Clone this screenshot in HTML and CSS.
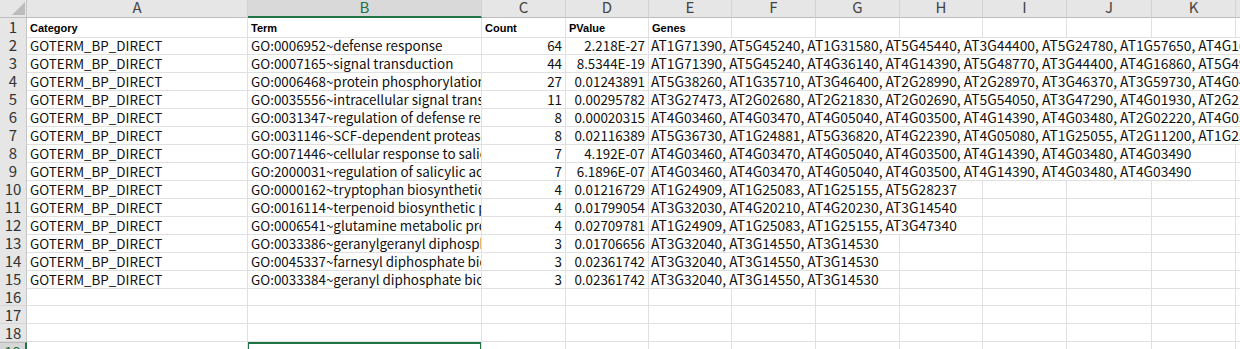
FILE: index.html
```html
<!DOCTYPE html>
<html>
<head>
    <meta charset="utf-8">
    <title>GO enrichment - BP DIRECT</title>
    <link rel="stylesheet" href="styles.css">
</head>
<body>
<div class="sheet">
    <div class="row colhead">
        <div class="corner"><span class="tri"></span></div>
        <div class="ch">A</div>
        <div class="ch sel">B</div>
        <div class="ch">C</div>
        <div class="ch">D</div>
        <div class="ch">E</div>
        <div class="ch">F</div>
        <div class="ch">G</div>
        <div class="ch">H</div>
        <div class="ch">I</div>
        <div class="ch">J</div>
        <div class="ch">K</div>
        <div class="ch">L</div>
    </div>

    <div class="row">
        <div class="rh">1</div>
        <div class="c hd">Category</div>
        <div class="c hd">Term</div>
        <div class="c hd">Count</div>
        <div class="c hd">PValue</div>
        <div class="c hd">Genes</div>
        <div class="c"></div><div class="c"></div><div class="c"></div><div class="c"></div>
        <div class="c"></div><div class="c"></div><div class="c"></div>
    </div>

    <div class="row">
        <div class="rh">2</div>
        <div class="c">GOTERM_BP_DIRECT</div>
        <div class="c">GO:0006952~defense response</div>
        <div class="c num">64</div>
        <div class="c num">2.218E-27</div>
        <div class="c genes s8">AT1G71390, AT5G45240, AT1G31580, AT5G45440, AT3G44400, AT5G24780, AT1G57650, AT4G16</div>
    </div>

    <div class="row">
        <div class="rh">3</div>
        <div class="c">GOTERM_BP_DIRECT</div>
        <div class="c">GO:0007165~signal transduction</div>
        <div class="c num">44</div>
        <div class="c num">8.5344E-19</div>
        <div class="c genes s8">AT1G71390, AT5G45240, AT4G36140, AT4G14390, AT5G48770, AT3G44400, AT4G16860, AT5G49</div>
    </div>

    <div class="row">
        <div class="rh">4</div>
        <div class="c">GOTERM_BP_DIRECT</div>
        <div class="c">GO:0006468~protein phosphorylation</div>
        <div class="c num">27</div>
        <div class="c num">0.01243891</div>
        <div class="c genes s8">AT5G38260, AT1G35710, AT3G46400, AT2G28990, AT2G28970, AT3G46370, AT3G59730, AT4G04</div>
    </div>

    <div class="row">
        <div class="rh">5</div>
        <div class="c">GOTERM_BP_DIRECT</div>
        <div class="c">GO:0035556~intracellular signal transduction</div>
        <div class="c num">11</div>
        <div class="c num">0.00295782</div>
        <div class="c genes s8">AT3G27473, AT2G02680, AT2G21830, AT2G02690, AT5G54050, AT3G47290, AT4G01930, AT2G21</div>
    </div>

    <div class="row">
        <div class="rh">6</div>
        <div class="c">GOTERM_BP_DIRECT</div>
        <div class="c">GO:0031347~regulation of defense response</div>
        <div class="c num">8</div>
        <div class="c num">0.00020315</div>
        <div class="c genes s8">AT4G03460, AT4G03470, AT4G05040, AT4G03500, AT4G14390, AT4G03480, AT2G02220, AT4G03</div>
    </div>

    <div class="row">
        <div class="rh">7</div>
        <div class="c">GOTERM_BP_DIRECT</div>
        <div class="c">GO:0031146~SCF-dependent proteasomal ubiquitin-dependent protein catabolic process</div>
        <div class="c num">8</div>
        <div class="c num">0.02116389</div>
        <div class="c genes s8">AT5G36730, AT1G24881, AT5G36820, AT4G22390, AT4G05080, AT1G25055, AT2G11200, AT1G25</div>
    </div>

    <div class="row">
        <div class="rh">8</div>
        <div class="c">GOTERM_BP_DIRECT</div>
        <div class="c">GO:0071446~cellular response to salicylic acid stimulus</div>
        <div class="c num">7</div>
        <div class="c num">4.192E-07</div>
        <div class="c genes s7">AT4G03460, AT4G03470, AT4G05040, AT4G03500, AT4G14390, AT4G03480, AT4G03490</div>
        <div class="c"></div>
    </div>

    <div class="row">
        <div class="rh">9</div>
        <div class="c">GOTERM_BP_DIRECT</div>
        <div class="c">GO:2000031~regulation of salicylic acid mediated signaling pathway</div>
        <div class="c num">7</div>
        <div class="c num">6.1896E-07</div>
        <div class="c genes s7">AT4G03460, AT4G03470, AT4G05040, AT4G03500, AT4G14390, AT4G03480, AT4G03490</div>
        <div class="c"></div>
    </div>

    <div class="row">
        <div class="rh">10</div>
        <div class="c">GOTERM_BP_DIRECT</div>
        <div class="c">GO:0000162~tryptophan biosynthetic process</div>
        <div class="c num">4</div>
        <div class="c num">0.01216729</div>
        <div class="c genes s4">AT1G24909, AT1G25083, AT1G25155, AT5G28237</div>
        <div class="c"></div><div class="c"></div><div class="c"></div><div class="c"></div>
    </div>

    <div class="row">
        <div class="rh">11</div>
        <div class="c">GOTERM_BP_DIRECT</div>
        <div class="c">GO:0016114~terpenoid biosynthetic process</div>
        <div class="c num">4</div>
        <div class="c num">0.01799054</div>
        <div class="c genes s4">AT3G32030, AT4G20210, AT4G20230, AT3G14540</div>
        <div class="c"></div><div class="c"></div><div class="c"></div><div class="c"></div>
    </div>

    <div class="row">
        <div class="rh">12</div>
        <div class="c">GOTERM_BP_DIRECT</div>
        <div class="c">GO:0006541~glutamine metabolic process</div>
        <div class="c num">4</div>
        <div class="c num">0.02709781</div>
        <div class="c genes s4">AT1G24909, AT1G25083, AT1G25155, AT3G47340</div>
        <div class="c"></div><div class="c"></div><div class="c"></div><div class="c"></div>
    </div>

    <div class="row">
        <div class="rh">13</div>
        <div class="c">GOTERM_BP_DIRECT</div>
        <div class="c">GO:0033386~geranylgeranyl diphosphate biosynthetic process</div>
        <div class="c num">3</div>
        <div class="c num">0.01706656</div>
        <div class="c genes s3">AT3G32040, AT3G14550, AT3G14530</div>
        <div class="c"></div><div class="c"></div><div class="c"></div><div class="c"></div><div class="c"></div>
    </div>

    <div class="row">
        <div class="rh">14</div>
        <div class="c">GOTERM_BP_DIRECT</div>
        <div class="c">GO:0045337~farnesyl diphosphate biosynthetic process</div>
        <div class="c num">3</div>
        <div class="c num">0.02361742</div>
        <div class="c genes s3">AT3G32040, AT3G14550, AT3G14530</div>
        <div class="c"></div><div class="c"></div><div class="c"></div><div class="c"></div><div class="c"></div>
    </div>

    <div class="row">
        <div class="rh">15</div>
        <div class="c">GOTERM_BP_DIRECT</div>
        <div class="c">GO:0033384~geranyl diphosphate biosynthetic process</div>
        <div class="c num">3</div>
        <div class="c num">0.02361742</div>
        <div class="c genes s3">AT3G32040, AT3G14550, AT3G14530</div>
        <div class="c"></div><div class="c"></div><div class="c"></div><div class="c"></div><div class="c"></div>
    </div>

    <div class="row">
        <div class="rh">16</div>
        <div class="c"></div><div class="c"></div><div class="c"></div><div class="c"></div>
        <div class="c"></div><div class="c"></div><div class="c"></div><div class="c"></div>
        <div class="c"></div><div class="c"></div><div class="c"></div><div class="c"></div>
    </div>

    <div class="row">
        <div class="rh">17</div>
        <div class="c"></div><div class="c"></div><div class="c"></div><div class="c"></div>
        <div class="c"></div><div class="c"></div><div class="c"></div><div class="c"></div>
        <div class="c"></div><div class="c"></div><div class="c"></div><div class="c"></div>
    </div>

    <div class="row">
        <div class="rh">18</div>
        <div class="c"></div><div class="c"></div><div class="c"></div><div class="c"></div>
        <div class="c"></div><div class="c"></div><div class="c"></div><div class="c"></div>
        <div class="c"></div><div class="c"></div><div class="c"></div><div class="c"></div>
    </div>

    <div class="row">
        <div class="rh sel">19</div>
        <div class="c"></div>
        <div class="c cur"></div>
        <div class="c"></div><div class="c"></div>
        <div class="c"></div><div class="c"></div><div class="c"></div><div class="c"></div>
        <div class="c"></div><div class="c"></div><div class="c"></div><div class="c"></div>
    </div>
</div>
</body>
</html>
```

FILE: styles.css
```css
*
{
    box-sizing: border-box;
}
html, body
{
    margin: 0;
    padding: 0;
}
body
{
    overflow: hidden;
    background: #fff;
    color: #111;
    font-family: "Noto Sans CJK SC", "Liberation Sans", sans-serif;
    font-size: 13.4px;
}
.sheet
{
    width: 1320px;
}
/* row header + columns A..L */
.row
{
    display: grid;
    grid-template-columns: 27px 221px 234px 84px 83px 83px 84px 84px 83px 84px 85px 84px 84px;
    height: 18px;
}

/* column letters */
.corner
{
    position: relative;
    background: #e6e6e6;
    border-right: 1px solid #c6c6c6;
    border-bottom: 1px solid #bdbdbd;
}
.tri
{
    position: absolute;
    right: 1px;
    bottom: 2px;
    width: 0;
    height: 0;
    border-left: 13px solid transparent;
    border-bottom: 13px solid #bcbcbc;
}
.ch
{
    background: #e6e6e6;
    color: #444;
    font-size: 15px;
    text-align: center;
    line-height: 14px;
    border-right: 1px solid #d2d2d2;
    border-bottom: 1px solid #bdbdbd;
}
.ch.sel
{
    background: #d9d9d9;
    color: #217346;
    border-bottom: 2px solid #217346;
}

/* row numbers */
.rh
{
    background: #e6e6e6;
    color: #333;
    font-size: 15px;
    text-align: center;
    line-height: 17px;
    border-right: 1px solid #c6c6c6;
    border-bottom: 1px solid #d6d6d6;
    overflow: hidden;
}
.rh.sel
{
    background: #d6d6d6;
    color: #217346;
    border-top: 1px solid #bdbdbd;
    border-right: 2px solid #217346;
}

/* cells */
.c
{
    padding: 0 3px;
    line-height: 18px;
    white-space: nowrap;
    overflow-x: clip;
    overflow-y: visible;
    border-right: 1px solid #e0e0e0;
    border-bottom: 1px solid #e0e0e0;
}
.hd
{
    font-family: "Liberation Sans", Arial, sans-serif;
    font-weight: bold;
    font-size: 11px;
    line-height: 17px;
    color: #000;
    padding-top: 2px;
}
.num
{
    text-align: right;
}
.genes
{
    padding-left: 2px;
    font-size: 13.8px;
}
.s3 { grid-column: span 3; }
.s4 { grid-column: span 4; }
.s7 { grid-column: span 7; }
.s8 { grid-column: span 8; }

.cur
{
    position: relative;
}
.cur::after
{
    content: "";
    position: absolute;
    left: -1px;
    top: 0;
    right: -1px;
    bottom: -1px;
    border: 2px solid #217346;
}
```
